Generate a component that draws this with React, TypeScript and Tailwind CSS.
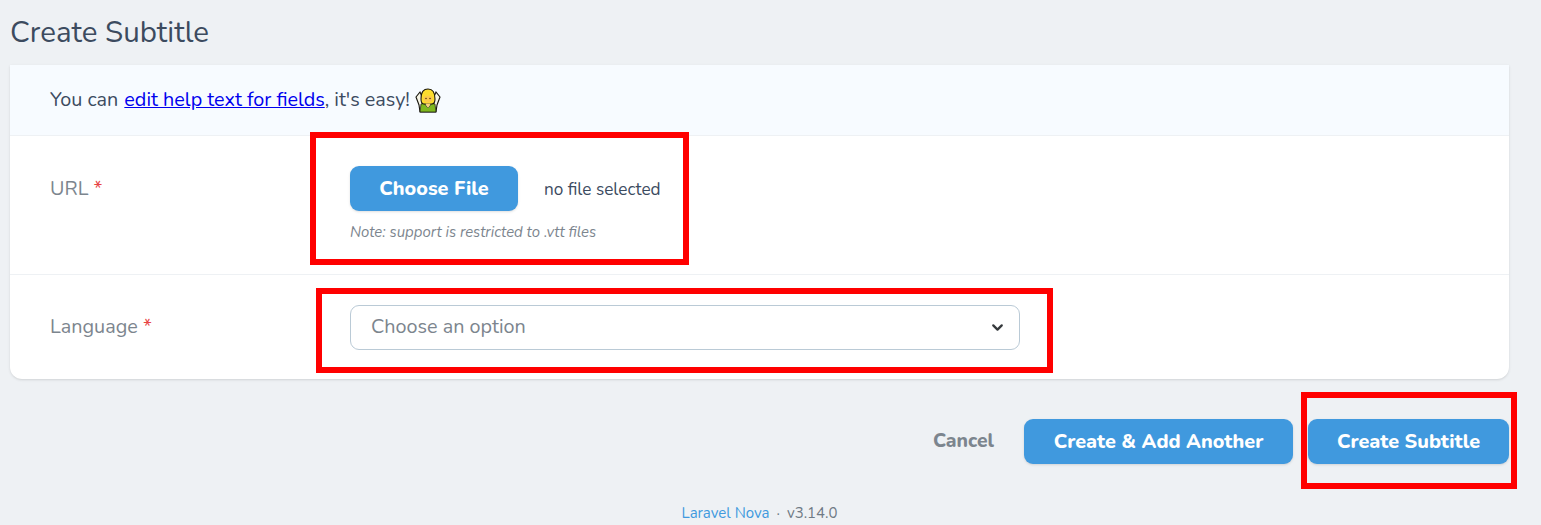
import { ChevronDown } from 'lucide-react'

function ShrugEmoji() {
  return (
    <svg width="26" height="25" viewBox="0 0 26 25" className="shrink-0">
      <path d="M1 9 L5 4 L8 11 L18 11 L21 4 L25 9 L22 17 L21 24 L5 24 L4 17 Z" fill="#f7f5e6" stroke="#15130c" strokeWidth="1.1" />
      <path d="M6 16 L9 15 L13 20 L17 15 L20 16 L21 24 L5 24 Z" fill="#7fb81f" stroke="#15130c" strokeWidth="0.7" />
      <path d="M6 11 C6 3 9 1 13 1 C17 1 20 3 20 11 C20 14 19 16 17 16 L9 16 C7 16 6 14 6 11 Z" fill="#fbdc2e" stroke="#15130c" strokeWidth="1.1" />
      <path d="M8.500 9 Q13 6 17.500 9 L17 13 Q13 16.500 9 13 Z" fill="#fbc94a" />
      <circle cx="11" cy="10.500" r="0.8" fill="#5a3410" />
      <circle cx="15" cy="10.500" r="0.8" fill="#5a3410" />
      <path d="M10.500 15.500 L15.500 15.500 L13 20 Z" fill="#fbd27a" />
    </svg>
  )
}

function FieldLabel({ text }: { text: string }) {
  return (
    <div className="w-[340px] pl-10 shrink-0 text-[19.8px] leading-[24px] text-[#7c858e]">
      {text} <span className="text-[#e74444]">*</span>
    </div>
  )
}

function BlueButton({ label, width }: { label: string; width: string }) {
  return (
    <button className={`${width} h-[45px] rounded-[9px] bg-[#4099de] shadow-sm text-white font-extrabold text-[19.8px] flex items-center justify-center`}>
      {label}
    </button>
  )
}

export default function App() {
  return (
    <div className="relative h-[525px] overflow-hidden bg-[#eef1f4] px-2.5 font-['Nunito','Noto_Sans','Lato',sans-serif] text-[#3c4b5f]">
      <h1 className="h-[65px] pt-[14px] text-[29.5px] leading-[36px] font-normal">Create Subtitle</h1>

      <div className="w-[1499px] h-[314px] rounded-b-xl bg-white shadow-sm flex flex-col">
        <div className="h-[71px] bg-[#f7fbff] border-b border-[#eef1f4] pl-10 flex items-center gap-[5px] text-[19.8px]">
          <span>
            You can <a href="#" className="ml-[1px] text-[#0000ee] underline">edit help text for fields</a>, it's easy!
          </span>
          <ShrugEmoji />
        </div>

        <div className="h-[139px] border-b border-[#eef1f4] flex pt-[30px]">
          <div className="h-[45px] flex items-center">
            <FieldLabel text="URL" />
          </div>
          <div>
            <div className="flex items-center gap-[26px]">
              <BlueButton label="Choose File" width="w-[168px]" />
              <span className="pt-[2px] text-[17.2px] text-[#3c4b5f]">no file selected</span>
            </div>
            <p className="mt-[11px] text-[14.9px] leading-[20px] italic text-[#7c858e]">Note: support is restricted to .vtt files</p>
          </div>
        </div>

        <div className="flex-1 flex pt-[30px]">
          <div className="h-[43px] flex items-center">
            <FieldLabel text="Language" />
          </div>
          <div className="w-[670px] h-[45px] rounded-[9px] border border-[#bacad6] pl-[20px] pr-[13px] flex items-center justify-between text-[19.8px] text-[#7c858e]">
            <span className="pb-[2px]">Choose an option</span>
            <ChevronDown className="w-[17px] h-[17px] text-[#35393c]" strokeWidth={3.2} />
          </div>
        </div>
      </div>

      <div className="w-[1499px] mt-10 flex items-center justify-end">
        <a href="#" className="mr-[30px] text-[19.3px] font-extrabold text-[#7c858e]">Cancel</a>
        <BlueButton label="Create & Add Another" width="w-[269px]" />
        <div className="w-[15px]" />
        <BlueButton label="Create Subtitle" width="w-[201px]" />
      </div>

      <div className="w-[1499px] mt-[39px] flex justify-center gap-[7px] text-[15px] leading-[20px] text-[#6f7a85]">
        <a href="#" className="text-[#4099de]">Laravel Nova</a>
        <span>·</span>
        <span>v3.14.0</span>
      </div>

      {/* annotation boxes drawn on top of the screenshot */}
      <div className="absolute left-[310px] top-[132px] w-[379px] h-[133px] border-[6px] border-[#ff0000]" />
      <div className="absolute left-[316px] top-[288px] w-[737px] h-[85px] border-[6px] border-[#ff0000]" />
      <div className="absolute left-[1301px] top-[392px] w-[216px] h-[97px] border-[6px] border-[#ff0000]" />
    </div>
  )
}
